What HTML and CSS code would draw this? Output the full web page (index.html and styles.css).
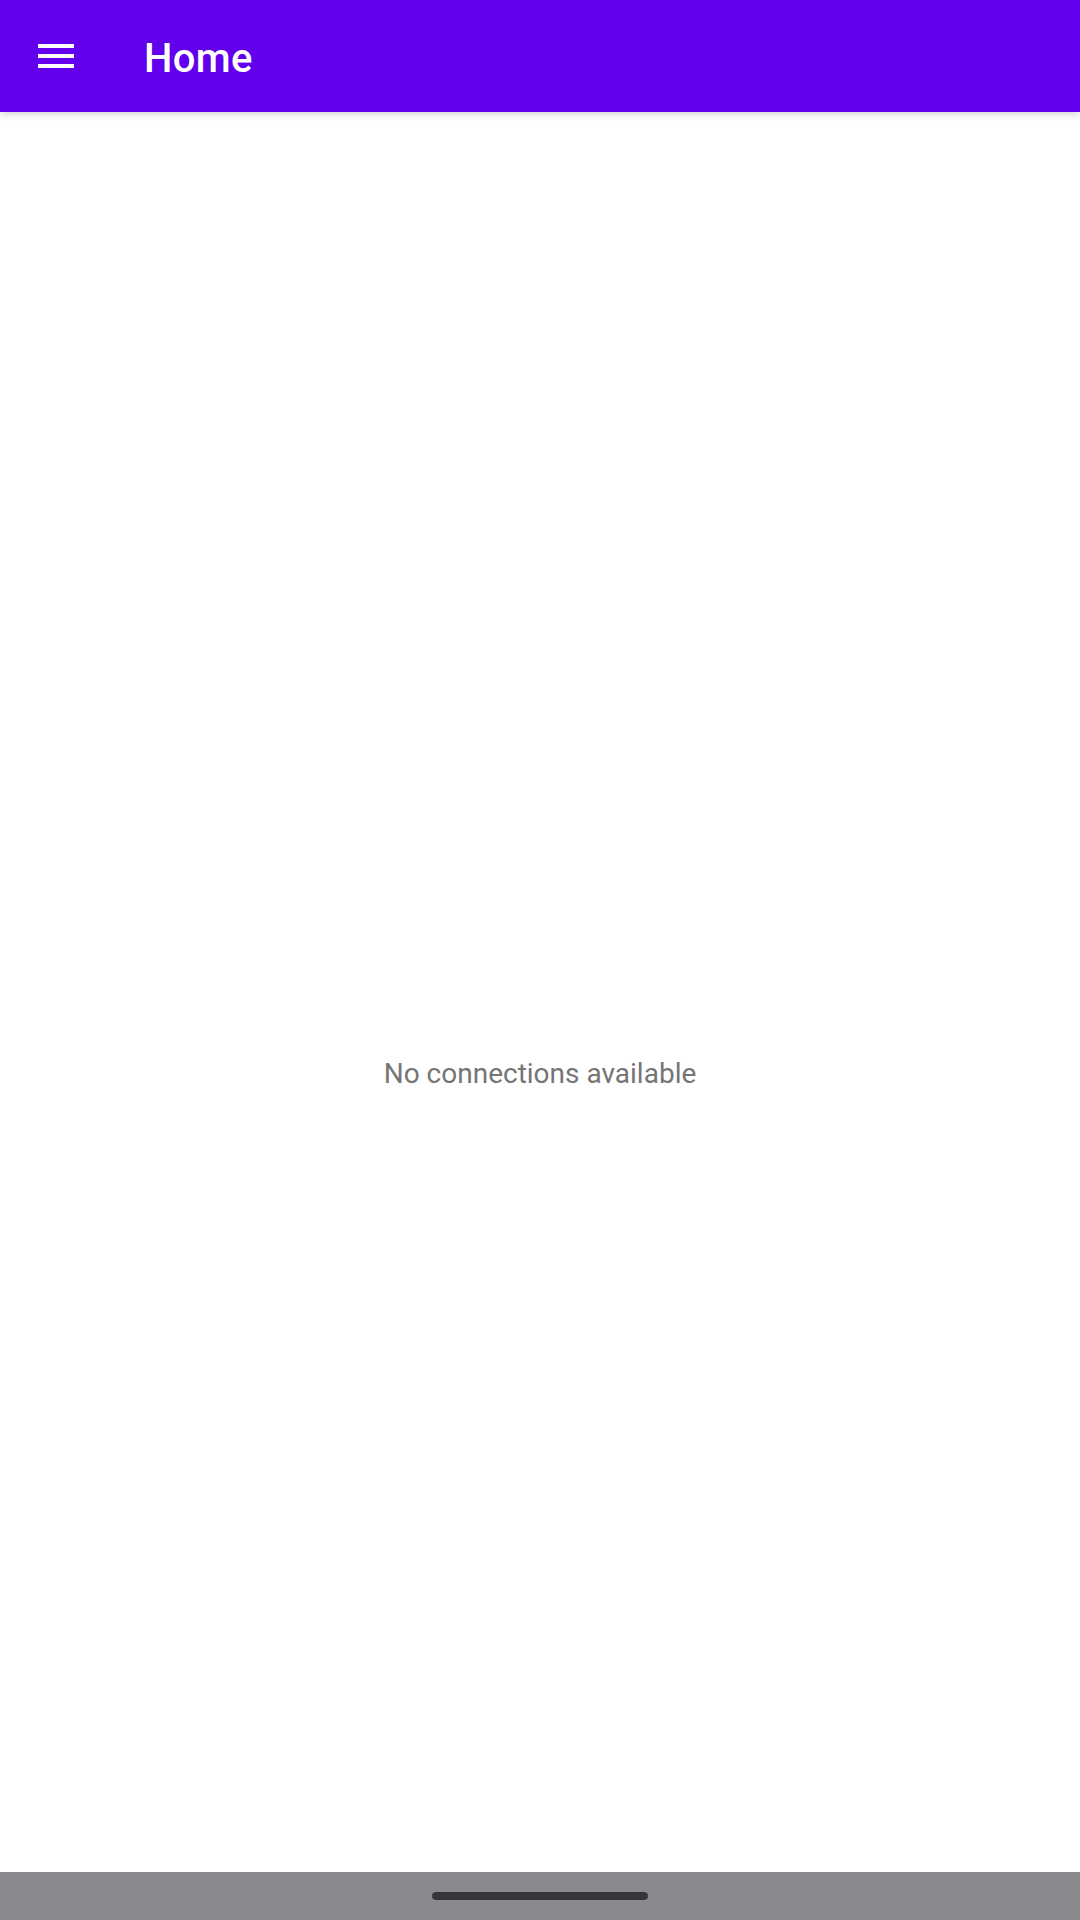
FILE: index.html
```html
<!DOCTYPE html>
<html>
<head>
<meta charset="utf-8">
<link rel="stylesheet" href="styles.css">
</head>
<body>
<div class="screen">
  <header class="appbar">
    <div class="nav-icon">
      <svg width="48" height="48" viewBox="0 0 24 24"><path fill="#fff" d="M3 18h18v-2H3v2zm0-5h18v-2H3v2zm0-7v2h18V6H3z"/></svg>
    </div>
    <div class="title">Home</div>
  </header>
  <main class="content">
    <p class="empty">No connections available</p>
  </main>
  <footer class="navbar"><div class="handle"></div></footer>
</div>
</body>
</html>
```
FILE: styles.css
```css
html, body { margin: 0; padding: 0; }
body { font-family: Roboto, "Noto Sans", sans-serif; background: #fff; }
.screen { width: 1080px; height: 1920px; display: flex; flex-direction: column; overflow: hidden; }
.appbar { height: 112px; flex: none; background: #6200ee; display: flex; align-items: center; position: relative; z-index: 1; box-shadow: 0 2px 8px rgba(0,0,0,0.18); }
.nav-icon { width: 48px; height: 48px; margin-left: 32px; }
.nav-icon svg { display: block; }
.title { margin-left: 64px; padding-top: 5px; color: #fff; font-size: 40px; font-weight: 500; letter-spacing: 0.4px; }
.content { flex: 1; padding-top: 942px; box-sizing: border-box; }
.empty { margin: 0; text-align: center; font-size: 28px; line-height: 40px; color: #757575; letter-spacing: 0; }
.navbar { height: 48px; flex: none; background: #8a8a8e; display: flex; justify-content: center; padding-top: 20px; box-sizing: border-box; }
.handle { width: 216px; height: 8px; border-radius: 4px; background: #363638; }
```
